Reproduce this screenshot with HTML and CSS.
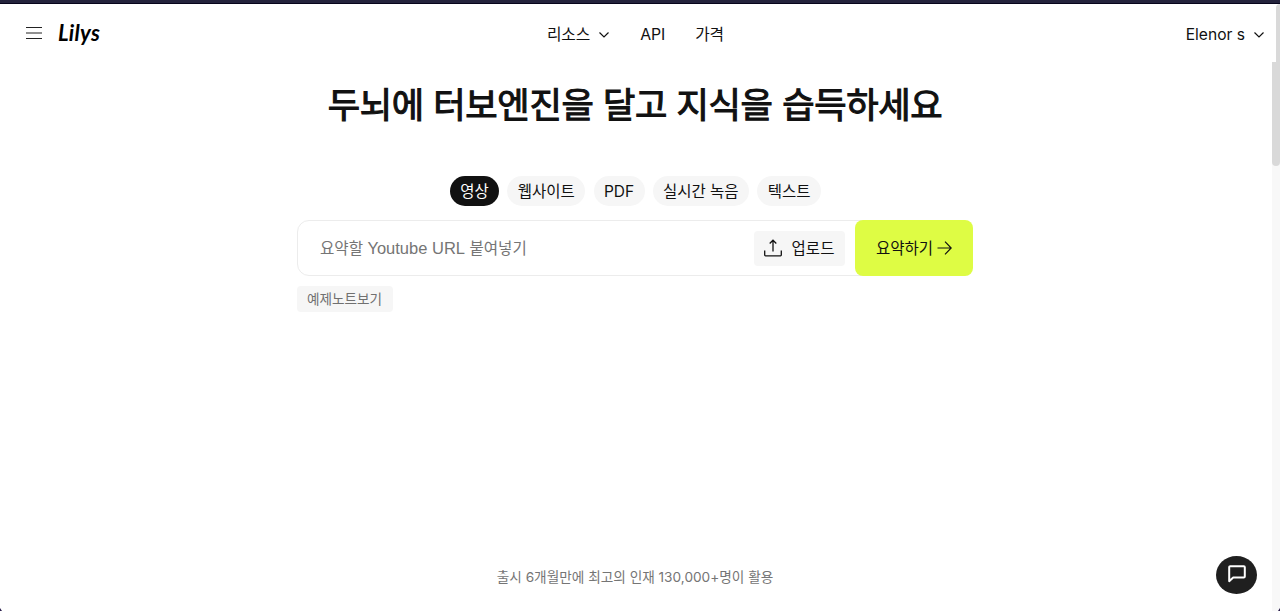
FILE: index.html
```html
<!DOCTYPE html>
<html lang="ko">
<head>
    <meta charset="UTF-8">
    <meta name="viewport" content="width=device-width, initial-scale=1.0">
    <title>Lilys</title>
    <link rel="stylesheet" href="styles.css">
</head>
<body>
    <div class="window-edge"></div>
    <header class="header">
        <div class="header-left">
            <svg class="menu-icon" width="16" height="14" viewBox="0 0 16 14" fill="none" stroke="#222">
                <path d="M0 1.500h16M0 7h16M0 12.500h16"/>
            </svg>
            <a class="logo">Lilys</a>
        </div>
        <nav class="nav">
            <a class="nav-link">리소스</a>
            <svg class="nav-arrow" width="10" height="6" viewBox="0 0 10 6" fill="none" stroke="#111" stroke-width="1.2">
                <path d="M.5.5L5 5 9.500.5"/>
            </svg>
            <a class="nav-link nav-api">API</a>
            <a class="nav-link">가격</a>
        </nav>
        <div class="user">
            <span>Elenor s</span>
            <svg class="user-arrow" width="10" height="6" viewBox="0 0 10 6" fill="none" stroke="#111" stroke-width="1.2">
                <path d="M.5.5L5 5 9.500.5"/>
            </svg>
        </div>
    </header>

    <main class="main">
        <h1 class="title">두뇌에 터보엔진을 달고 지식을 습득하세요</h1>

        <div class="tabs">
            <button class="tab tab-video active">영상</button>
            <button class="tab tab-web">웹사이트</button>
            <button class="tab tab-pdf">PDF</button>
            <button class="tab tab-record">실시간 녹음</button>
            <button class="tab tab-text">텍스트</button>
        </div>

        <div class="search">
            <div class="search-box">
                <span class="placeholder">요약할 <span class="latin">Youtube URL</span> 붙여넣기</span>
                <button class="upload">
                    <svg width="18" height="18" viewBox="0 0 18 18" fill="none" stroke="#111" stroke-width="1.3">
                        <path d="M9 12.500V1.300M5.700 4.500L9 1.200l3.300 3.300M.7 11.500v4.500q0 .8.8.8h15q.8 0 .8-.8v-4.500"/>
                    </svg>
                    <span>업로드</span>
                </button>
            </div>
            <button class="submit">
                <span>요약하기</span>
                <svg width="15" height="14" viewBox="0 0 15 14" fill="none" stroke="#111" stroke-width="1.2">
                    <path d="M.5 7h13.500M8 .7L14.200 7 8 13.300"/>
                </svg>
            </button>
        </div>

        <button class="example-note">예제노트보기</button>

        <p class="footnote">출시 6개월만에 최고의 인재 130,000+명이 활용</p>
    </main>

    <!-- Scrollbars -->
    <div class="window-scroll"></div>
    <div class="page-scroll">
        <div class="page-scroll-thumb"></div>
    </div>

    <button class="chat">
        <svg width="18" height="18" viewBox="0 0 18 18" fill="none" stroke="#fff" stroke-width="2" stroke-linejoin="round">
            <path d="M2.200 1.200h13.600a1 1 0 0 1 1 1v9.400a1 1 0 0 1-1 1H5.200L1.200 16.200V2.200a1 1 0 0 1 1-1z"/>
        </svg>
    </button>

    <div class="corner corner-left"></div>
    <div class="corner corner-right"></div>
</body>
</html>
```

FILE: styles.css
```css
* {
    box-sizing: border-box;
}

body {
    margin: 0;
    height: 611px;
    overflow: hidden;
    position: relative;
    background-color: #fff;
    color: #111;
    font-family: Inter, "Noto Sans CJK KR", sans-serif;
    font-size: 16px;
}

button {
    margin: 0;
    padding: 0;
    border: none;
    color: inherit;
    font-family: inherit;
    font-size: 15.5px;
    white-space: nowrap;
    cursor: pointer;
}

svg {
    display: block;
    flex-shrink: 0;
}

.window-edge {
    height: 4px;
    background-color: #24233c;
    border-bottom: 1px solid #06041b;
}

/* Header */
.header {
    display: grid;
    grid-template-columns: 1fr auto 1fr;
    align-items: center;
    height: 58px;
    padding: 2px 16px 0 26px;
    line-height: 24px;
}

.header-left {
    display: flex;
    align-items: center;
    gap: 16px;
    margin-top: -3px;
}

.logo {
    font-family: Lato, sans-serif;
    font-size: 22px;
    font-weight: 700;
    font-style: italic;
    letter-spacing: 0.3px;
    color: #000;
}

.nav {
    display: flex;
    align-items: center;
    margin: 1px 19px 0 0;
    font-size: 15.8px;
    letter-spacing: -0.1px;
}

.nav-arrow {
    margin: 1px 31px 0 9px;
}

.nav-api {
    margin-right: 30px;
}

.user {
    display: flex;
    align-items: center;
    justify-content: flex-end;
    gap: 9px;
    margin-top: 1px;
    font-size: 15.6px;
}

/* Main */
.main {
    display: flex;
    flex-direction: column;
    width: 676px;
    height: 549px;
    margin-left: 297px;
}

.title {
    margin: 17px 0 0;
    font-size: 35.2px;
    font-weight: 400;
    line-height: 52px;
    text-align: center;
    white-space: nowrap;
    letter-spacing: -0.35px;
    -webkit-text-stroke: 1.1px #111;
}

.tabs {
    display: flex;
    justify-content: center;
    gap: 8.3px;
    margin: 45px 0 0 1px;
}

.tab {
    height: 30px;
    padding-bottom: 2px;
    border-radius: 15px;
    background-color: #f6f6f6;
}

.tab.active {
    background-color: #111;
    color: #fff;
}

.tab-video {
    width: 49px;
}

.tab-web {
    width: 78px;
}

.tab-pdf {
    width: 51px;
    padding-bottom: 0;
}

.tab-record {
    width: 96px;
}

.tab-text {
    width: 64px;
}

/* Search */
.search {
    display: flex;
    height: 56px;
    margin-top: 14px;
    border: 1px solid #ececec;
    border-radius: 12px;
}

.search-box {
    flex: 1;
    display: flex;
    align-items: center;
    justify-content: space-between;
    padding: 0 10px 0 22px;
}

.placeholder {
    padding-bottom: 2px;
    color: #757575;
    font-size: 15.6px;
}

.latin {
    font-family: "Liberation Sans", Arial, sans-serif;
    font-size: 16.5px;
}

.upload {
    display: flex;
    align-items: center;
    justify-content: center;
    gap: 10px;
    width: 91px;
    height: 35px;
    padding-right: 1px;
    border-radius: 4px;
    background-color: #f6f6f6;
}

.upload span,
.submit span {
    padding-bottom: 2px;
}

.submit {
    display: flex;
    align-items: center;
    justify-content: center;
    gap: 4px;
    width: 118px;
    height: 56px;
    margin: -1px -1px 0 0;
    border-radius: 8px;
    background-color: #defc44;
}

.example-note {
    align-self: flex-start;
    width: 96px;
    height: 26px;
    margin-top: 10px;
    padding: 0 1px 2px 0;
    border-radius: 4px;
    background-color: #f6f6f6;
    color: #707070;
    font-size: 13.6px;
}

.footnote {
    margin: auto 0 24px;
    color: #757575;
    font-size: 13.65px;
    line-height: 20px;
    text-align: center;
}

/* Scrollbars */
.window-scroll {
    position: absolute;
    top: 4px;
    right: 0;
    width: 4px;
    height: 58px;
    border-top-left-radius: 4px;
    background-color: #d9d9d9;
}

.page-scroll {
    position: absolute;
    top: 62px;
    right: 0;
    bottom: 0;
    width: 8px;
    background-color: #f8f8f8;
}

.page-scroll-thumb {
    height: 104px;
    border-radius: 0 0 4px 4px;
    background-color: #d9d9d9;
}

/* Chat button */
.chat {
    position: absolute;
    right: 23px;
    bottom: 17px;
    display: flex;
    align-items: center;
    justify-content: center;
    width: 41px;
    height: 38px;
    border-radius: 50%;
    background-color: #1f1f1f;
}

.chat svg {
    margin-top: -3px;
}

/* Rounded window corners */
.corner {
    position: absolute;
    bottom: 0;
    width: 2px;
    height: 3px;
    background-color: #2b1f4d;
}

.corner-left {
    left: 0;
    clip-path: polygon(0 0, 100% 100%, 0 100%);
}

.corner-right {
    right: 0;
    clip-path: polygon(100% 0, 100% 100%, 0 100%);
}
```
